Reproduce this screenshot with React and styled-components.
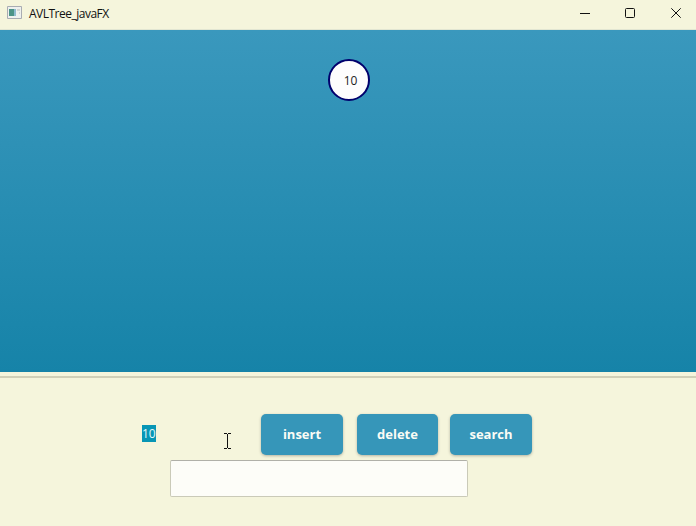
import React from "react";
import styled, { createGlobalStyle } from "styled-components";

const Global = createGlobalStyle`
  * { box-sizing: border-box; }
  body { margin: 0; overflow: hidden; font-family: "Open Sans", "Noto Sans", sans-serif; }
`;
const Window = styled.div`
  width: 696px; height: 526px; display: flex; flex-direction: column; background: #f5f5dc;
`;
const TitleBar = styled.header`
  height: 30px; padding: 0 15px 4px 7px; display: flex; align-items: center;
  font-size: 12px; color: #111; border-bottom: 1px solid #e2e6d2;
`;
const Title = styled.span`
  margin: 2px 0 0 7px; letter-spacing: -0.5px; flex: 1;
`;
const Controls = styled.div`display: flex; gap: 35px;`;
const TreeCanvas = styled.main`
  height: 342px; padding: 29px 0 0 2px; display: flex; justify-content: center; align-items: flex-start;
  background: linear-gradient(#3a98bd, #1683a8);
`;
const Node = styled.div`
  width: 42px; height: 42px; border: 2px solid #00006c; border-radius: 50%; background: #fdfdfd;
  display: flex; align-items: center; justify-content: center; padding-left: 3px;
  font-size: 12px; letter-spacing: -0.2px; color: #1c1c1c;
`;
const Divider = styled.div`
  height: 6px; border-bottom: 2px solid #d0d0b8;
`;
const Panel = styled.footer`padding-top: 36px;`;
const Row = styled.div`display: flex; align-items: flex-start; padding-left: 142px; height: 46px;`;
const Selection = styled.span`
  width: 14px; height: 17px; margin-top: 11px; line-height: 17px; background: #0796b5; color: #e8f6fa;
  font-size: 12px; letter-spacing: -0.2px;
`;
const Cursor = styled.svg`margin: 19px 0 0 68px;`;
const Buttons = styled.div`display: flex; margin-left: 30px;`;
const Button = styled.button`
  width: ${(p) => p.$width}px; height: 41px; margin: 0 ${(p) => p.$gap}px 0 0; padding: 0 0 2px; border: 0; border-radius: 5px;
  background: #3696b9; color: #fafcf5; font: 700 13px "Open Sans", sans-serif;
  box-shadow: 0 1px 3px #0004;
`;
const Field = styled.input`
  display: block; width: 298px; height: 37px; margin-left: 170px; border: 1px solid #cacab8; border-top-color: #b0b0a8;
  border-radius: 2px; background: #fdfdf8; outline: none; padding: 0 8px;
`;

export default function App() {
  return (
    <Window>
      <Global />
      <TitleBar>
        <svg width="15" height="13" viewBox="0 0 15 13">
          <path d="M.5.5h14v12H.5z" fill="#eef1ee" stroke="#a9acb2" />
          <path d="M2 3h5v7H2z" fill="#4b9487" />
          <path d="M7 3h2v7H7z" fill="#8fbbd0" />
          <path d="M10 4h3M12 7h1" stroke="#b9bdb9" />
        </svg>
        <Title>AVLTree_javaFX</Title>
        <Controls>
          <svg width="10" height="10"><path d="M0 5.5h10" stroke="#111" /></svg>
          <svg width="10" height="10"><rect x=".5" y=".5" width="9" height="9" rx="1" fill="none" stroke="#111" /></svg>
          <svg width="11" height="10"><path d="M1.3.3 10.7 9.7M10.7.3 1.3 9.7" stroke="#111" /></svg>
        </Controls>
      </TitleBar>
      <TreeCanvas><Node>10</Node></TreeCanvas>
      <Divider />
      <Panel>
        <Row>
          <Selection>10</Selection>
          <Cursor width="7" height="16" viewBox="0 0 7 16"><path d="M0 .5h3M4 .5h3M3.5 1v14M0 15.5h3M4 15.5h3" stroke="#111" fill="none" /></Cursor>
          <Buttons>
            <Button $width={82} $gap={14}>insert</Button>
            <Button $width={81} $gap={12}>delete</Button>
            <Button $width={82} $gap={0}>search</Button>
          </Buttons>
        </Row>
        <Field aria-label="Result" />
      </Panel>
    </Window>
  );
}
